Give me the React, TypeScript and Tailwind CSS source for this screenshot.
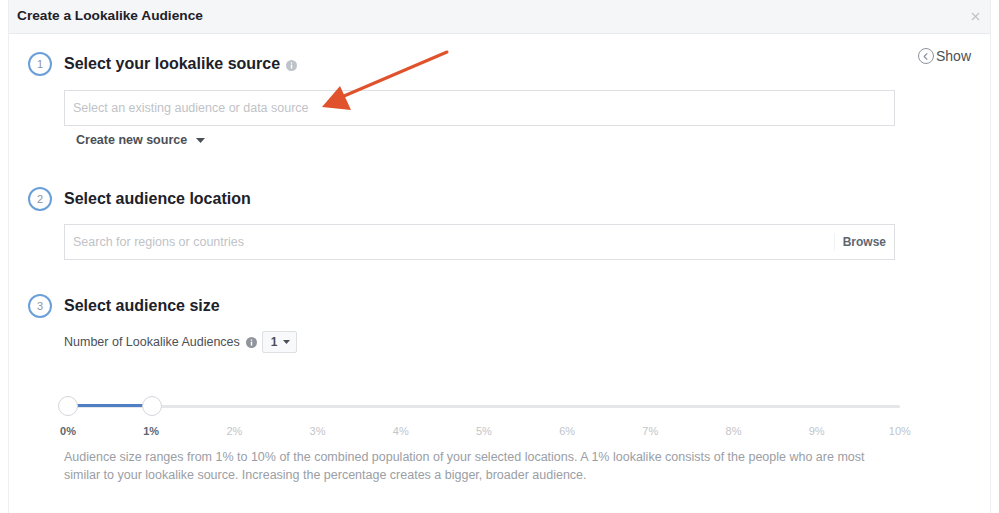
import { ChevronLeft, X } from "lucide-react";

const font = { fontFamily: '"Liberation Sans", Arial, sans-serif' };

const StepCircle = ({ n }: { n: number }) => (
    <div className="w-6 h-6 rounded-full border-2 border-[#6a9fd8] flex items-center justify-center text-[11px] text-[#8d949e]">
        {n}
    </div>
);

const InfoDot = ({ color }: { color: string }) => (
    <svg width="11" height="11" viewBox="0 0 11 11">
        <circle cx="5.5" cy="5.5" r="5.5" fill={color} />
        <rect x="4.8" y="4.6" width="1.4" height="4" fill="#fff" />
        <circle cx="5.5" cy="3" r="0.8" fill="#fff" />
    </svg>
);

const percents = ["0%", "1%", "2%", "3%", "4%", "5%", "6%", "7%", "8%", "9%", "10%"];

export default function App() {
    return (
        <div className="relative w-[999px] h-[513px] bg-white overflow-hidden" style={font}>
            <div className="mx-2 h-[513px] border-l border-r border-[#eceef1]">
                <div className="h-[34px] bg-[#f5f6f7] border-b border-[#e9eaed] flex items-center justify-between pl-[8px] pr-[8px]">
                    <span className="text-[13.7px] font-bold text-[#1d2129]">Create a Lookalike Audience</span>
                    <X size={13} strokeWidth={2} className="text-[#bcc0c4]" />
                </div>
                <div className="flex pl-[19px]">
                    <div className="w-[867px] pt-[18px]">
                        <div className="flex items-center gap-3 h-6">
                            <StepCircle n={1} />
                            <span className="text-[16px] font-bold text-[#1d2129]">Select your lookalike source</span>
                            <span className="-ml-1.5 mt-0.5"><InfoDot color="#bec3c9" /></span>
                        </div>
                        <div className="ml-9 mt-[14px] h-[36px] border border-[#dddfe2] flex items-center pl-[8px] text-[12.5px] text-[#bfc3c8]">
                            Select an existing audience or data source
                        </div>
                        <div className="ml-[48px] mt-[5px] h-[18px] flex items-center gap-[9px] text-[12.5px] font-bold text-[#4b4f56]">
                            Create new source
                            <svg width="9" height="5" viewBox="0 0 9 5"><path d="M0 0h9L4.5 5z" fill="#4b4f56" /></svg>
                        </div>

                        <div className="flex items-center gap-3 h-6 mt-[38px]">
                            <StepCircle n={2} />
                            <span className="text-[16px] font-bold text-[#1d2129]">Select audience location</span>
                        </div>
                        <div className="ml-9 mt-[13px] h-[36px] border border-[#dddfe2] flex items-center justify-between pl-[8px] pr-[8px] text-[12.5px]">
                            <span className="text-[#bfc3c8]">Search for regions or countries</span>
                            <span className="border-l border-[#f0f1f3] pl-2 font-bold text-[#606770] text-[12px]">Browse</span>
                        </div>

                        <div className="flex items-center gap-3 h-6 mt-[34px]">
                            <StepCircle n={3} />
                            <span className="text-[16px] font-bold text-[#1d2129]">Select audience size</span>
                        </div>
                        <div className="ml-9 mt-[13px] h-[22px] flex items-center text-[12.5px] text-[#4b4f56]">
                            Number of Lookalike Audiences
                            <span className="ml-[6px] mr-[5px]"><InfoDot color="#90949c" /></span>
                            <div className="h-[22px] w-[35px] border border-[#dddfe2] rounded-[2px] bg-[#f8f9fa] flex items-center pl-[8px] gap-[5px] font-bold text-[12px] text-[#4b4f56]">
                                1
                                <svg width="7" height="4" viewBox="0 0 7 4"><path d="M0 0h7L3.5 4z" fill="#4b4f56" /></svg>
                            </div>
                        </div>

                        <div className="ml-5 mt-[43px] w-[872px]">
                            <div className="relative h-5 px-5 flex items-center">
                                <div className="w-full h-[3px] bg-[#e4e6e9] rounded" />
                                <div className="absolute left-5 top-[8px] w-[84px] h-[3px] bg-[#4f7fc4]" />
                                <div className="absolute left-[10px] top-0 w-5 h-5 rounded-full bg-white border border-[#d3d6db]" />
                                <div className="absolute left-[94px] top-0 w-5 h-5 rounded-full bg-white border border-[#d3d6db]" />
                            </div>
                            <div className="mt-2 flex justify-between">
                                {percents.map((p, i) => (
                                    <span
                                        key={p}
                                        className={i < 2 ? "w-10 text-center text-[11px] leading-[14px] font-bold text-[#606770]" : "w-10 text-center text-[11px] leading-[14px] text-[#c2c5ca]"}
                                    >
                                        {p}
                                    </span>
                                ))}
                            </div>
                        </div>
                        <p className="ml-9 mt-[10px] w-[835px] text-[12.5px] leading-[18px] text-[#9a9ea5]">
                            Audience size ranges from 1% to 10% of the combined population of your selected locations. A 1% lookalike consists of the people who are most similar to your lookalike source. Increasing the percentage creates a bigger, broader audience.
                        </p>
                    </div>
                    <div className="ml-[23px] pt-[10px]">
                        <div className="h-6 flex items-center gap-[2px] text-[14px] text-[#4b4f56]">
                            <span className="w-4 h-4 rounded-full border border-[#8d949e] flex items-center justify-center">
                                <ChevronLeft size={11} strokeWidth={2.5} className="text-[#8d949e] -ml-px" />
                            </span>
                            Show
                        </div>
                    </div>
                </div>
            </div>

            <svg className="absolute left-0 top-0 pointer-events-none" width="999" height="513">
                <line x1="447" y1="52" x2="344" y2="96" stroke="#e0522c" strokeWidth="3" strokeLinecap="round" />
                <polygon points="322,107 340,86 351,110" fill="#e0522c" />
            </svg>
        </div>
    );
}
